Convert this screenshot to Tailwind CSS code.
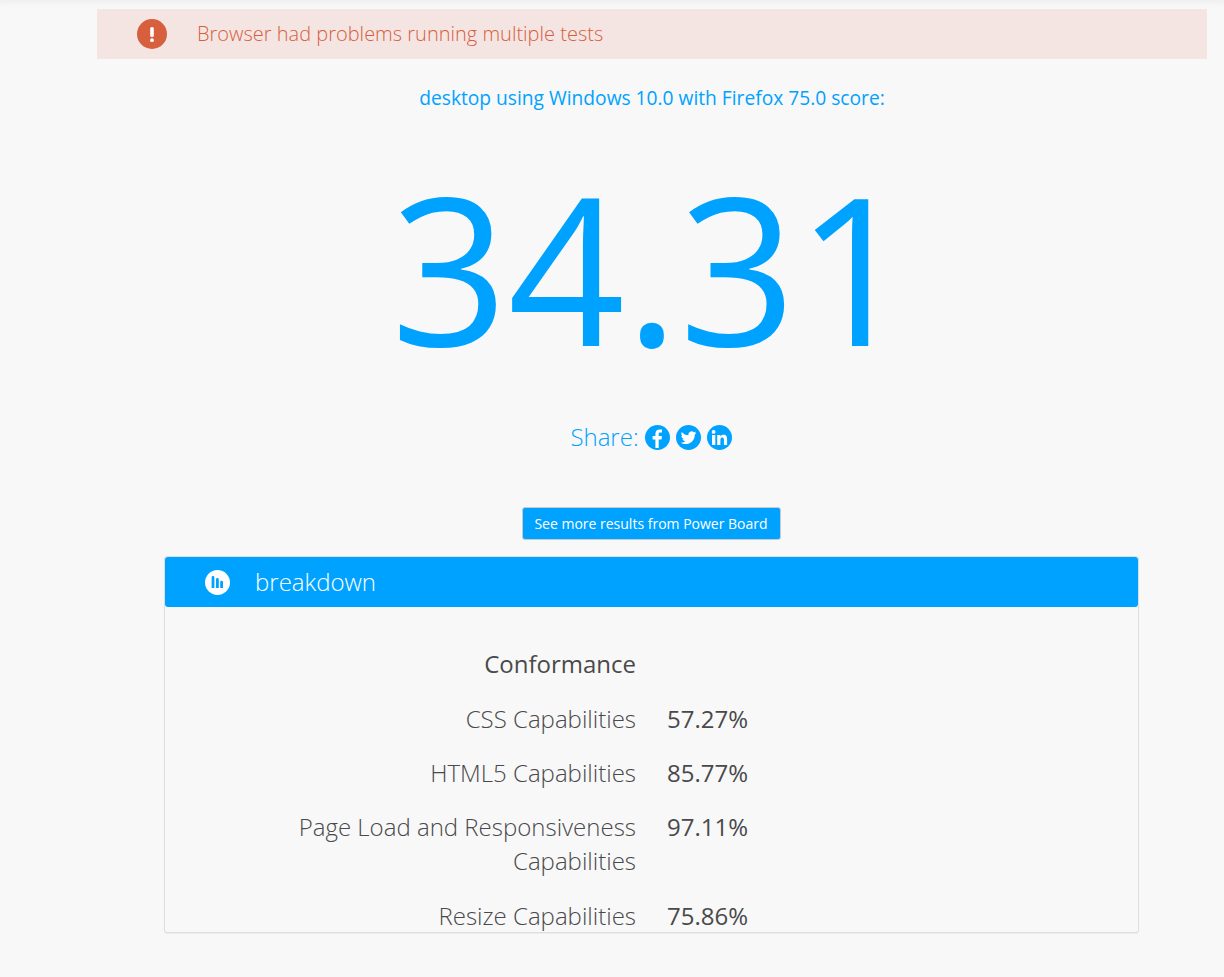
<!DOCTYPE html>
<html lang="en">
  <head>
    <meta charset="UTF-8" />
    <title>Score</title>
    <script src="https://cdn.jsdelivr.net/npm/@tailwindcss/browser@4"></script>
  </head>
  <body class="h-[977px] overflow-hidden bg-[#f8f8f8] font-['Open_Sans',sans-serif] font-light shadow-[inset_0_8px_8px_-6px_rgba(0,0,0,0.05)]">
    <div class="pl-[97px] pr-[17px] pt-[9px]">
      <div class="flex h-[50px] items-center bg-[#f4e5e2] pl-10 text-[20px] text-[#d65f3e]">
        <svg class="h-[30px] w-[30px]" viewBox="0 0 30 30">
          <circle cx="15" cy="15" r="15" fill="#d65f3e" />
          <rect x="13.2" y="8" width="3.6" height="10" rx="1.6" fill="#fff" />
          <circle cx="15" cy="21.2" r="1.9" fill="#fff" />
        </svg>
        <span class="ml-[30px]">Browser had problems running multiple tests</span>
      </div>
    </div>
    <div class="flex flex-col items-center pl-[80px]">
      <p class="mt-[25px] text-[19.2px] leading-[28px] font-normal text-[#00a2ff]">desktop using Windows 10.0 with Firefox 75.0 score:</p>
      <p class="mt-[12px] text-[205px] leading-[286px] font-normal text-[#00a2ff]">34.31</p>
      <div class="mt-[10px] -ml-[2px] flex items-center text-[24px] leading-[34px] text-[#00a2ff]">
        <span>Share:</span>
        <svg class="ml-[6px] h-[25px] w-[25px]" viewBox="0 0 25 25">
          <circle cx="12.5" cy="12.5" r="12.5" fill="#00a2ff" />
          <path d="M10.4 23v-8.6H7.6v-3.3h2.8V8.7c0-2.8 1.7-4.3 4.2-4.3 1.1 0 2.1.1 2.4.1v2.9h-1.7c-1.3 0-1.6.6-1.6 1.6v2.1h3.2l-.4 3.3h-2.8V23z" fill="#fff" />
        </svg>
        <svg class="ml-[6px] h-[25px] w-[25px]" viewBox="0 0 25 25">
          <circle cx="12.5" cy="12.5" r="12.5" fill="#00a2ff" />
          <path transform="translate(12.5 12.5) scale(1.12) translate(-12.5 -12.5)" d="M19.5 8.3c-.5.2-1 .4-1.6.5.6-.4 1-.9 1.2-1.6-.5.3-1.1.6-1.8.7a2.9 2.9 0 0 0-4.9 2.6c-2.4-.1-4.5-1.2-5.9-3-.8 1.3-.4 3 .9 3.9-.5 0-.9-.1-1.3-.4 0 1.4 1 2.6 2.3 2.9-.4.1-.9.1-1.3 0 .4 1.2 1.4 2 2.7 2-1.2 1-2.8 1.4-4.3 1.2 1.3.8 2.8 1.3 4.4 1.3 5.4 0 8.4-4.5 8.2-8.6.6-.4 1.1-.9 1.4-1.5z" fill="#fff" />
        </svg>
        <svg class="ml-[6px] h-[25px] w-[25px]" viewBox="0 0 25 25">
          <circle cx="12.5" cy="12.5" r="12.5" fill="#00a2ff" />
          <path d="M5 10h3.3v10H5zM6.6 5a1.9 1.9 0 1 1 0 3.8 1.9 1.9 0 0 1 0-3.8zM10.2 10h3.1v1.4c.5-.9 1.6-1.6 3.1-1.6 3.1 0 3.7 2 3.7 4.7V20h-3.2v-4.9c0-1.2 0-2.6-1.6-2.6s-1.9 1.2-1.9 2.5v5h-3.2z" fill="#fff" />
        </svg>
      </div>
      <button class="mt-[53px] h-[33px] w-[259px] -translate-x-px rounded-[3px] border border-[#c4ccd2] bg-[#00a2ff] text-[14px] font-normal text-white">See more results from Power Board</button>
    </div>
    <div class="mt-4 ml-[164px] h-[377px] w-[975px] rounded-[3px] border border-[#dedede] bg-[#f8f8f8] shadow-[0_1px_1px_rgba(0,0,0,0.05)]">
      <div class="flex h-[50px] items-center rounded-[3px] bg-[#00a2ff] pl-[40px] text-[24px] text-white">
        <svg class="h-[25px] w-[25px]" viewBox="0 0 25 25">
          <circle cx="12.5" cy="12.5" r="12.5" fill="#fff" />
          <path d="M6.6 7.4a1.4 1.4 0 0 1 2.8 0V18H6.6zM11 9.4a1.4 1.4 0 0 1 2.8 0V18H11zM15.2 12.2a1.4 1.4 0 0 1 2.8 0V18h-2.8z" fill="#00a2ff" />
        </svg>
        <span class="ml-[25px]">breakdown</span>
      </div>
      <div class="grid grid-cols-[471px_1fr] gap-x-[31px] pt-[40px] text-[24px] leading-[34px] text-[#49494b]">
        <div class="mb-[21px] text-right font-normal text-[#4a4a4a]">Conformance</div>
        <div></div>
        <div class="mb-[20px] text-right">CSS Capabilities</div>
        <div class="font-normal">57.27%</div>
        <div class="mb-[20px] text-right">HTML5 Capabilities</div>
        <div class="font-normal">85.77%</div>
        <div class="mb-[21px] pl-[100px] text-right">Page Load and Responsiveness Capabilities</div>
        <div class="font-normal">97.11%</div>
        <div class="text-right">Resize Capabilities</div>
        <div class="font-normal">75.86%</div>
      </div>
    </div>
  </body>
</html>
